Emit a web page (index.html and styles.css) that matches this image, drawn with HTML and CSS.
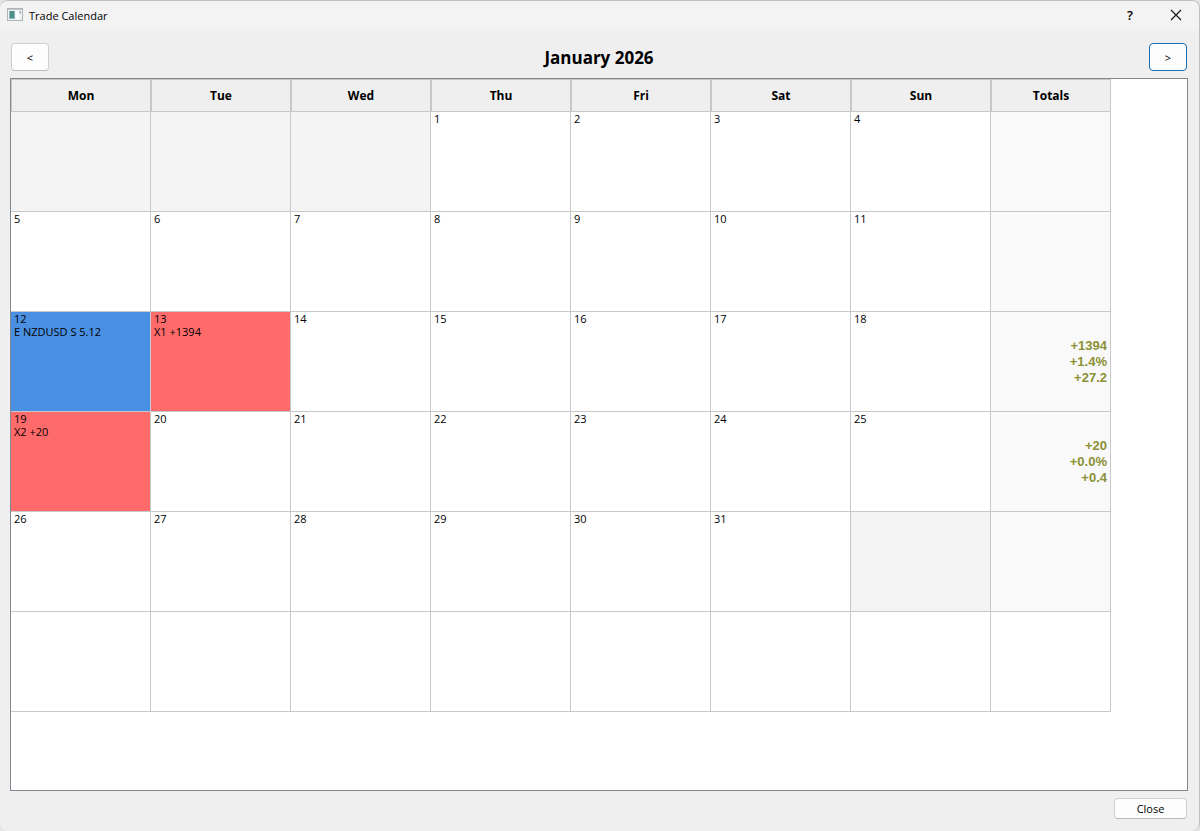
FILE: index.html
```html
<!DOCTYPE html>
<html lang="en">
<head>
    <meta charset="UTF-8">
    <meta name="viewport" content="width=device-width, initial-scale=1.0">
    <title>Trade Calendar</title>
    <link rel="stylesheet" href="styles.css">
</head>
<body>

    <div class="window">

        <!-- Title Bar -->
        <header class="title-bar">
            <svg class="app-icon" width="16" height="14" viewBox="0 0 16 14">
                <rect x="0.5" y="0.5" width="15" height="12" fill="#f1f4f4" stroke="#b0b4b6"/>
                <rect x="1" y="1" width="14" height="1" fill="#c3c8ca"/>
                <rect x="2" y="3" width="6" height="8" fill="#8fb3c9"/>
                <rect x="3" y="3" width="4" height="7" fill="#4c9088"/>
                <rect x="9" y="3" width="3" height="8" fill="#ffffff"/>
                <path d="M12 3 H14 V6 H13 V5 H12 Z" fill="#b4bcc0"/>
            </svg>
            <span class="title">Trade Calendar</span>
            <button class="title-button help" aria-label="Help">?</button>
            <button class="title-button" aria-label="Close window">
                <svg width="12" height="12" viewBox="0 0 12 12">
                    <path d="M1 1 L11 11 M11 1 L1 11" stroke="#1a1a1a" stroke-width="1.2" fill="none"/>
                </svg>
            </button>
        </header>

        <!-- Month Navigation -->
        <div class="month-bar">
            <button class="nav-button" aria-label="Previous month">&lt;</button>
            <h1>January 2026</h1>
            <button class="nav-button active" aria-label="Next month">&gt;</button>
        </div>

        <!-- Calendar Grid -->
        <div class="calendar-frame">
            <table class="calendar">
                <thead>
                    <tr>
                        <th>Mon</th>
                        <th>Tue</th>
                        <th>Wed</th>
                        <th>Thu</th>
                        <th>Fri</th>
                        <th>Sat</th>
                        <th>Sun</th>
                        <th class="totals-head">Totals</th>
                    </tr>
                </thead>
                <tbody>
                    <tr>
                        <td class="outside"></td>
                        <td class="outside"></td>
                        <td class="outside"></td>
                        <td>1</td>
                        <td>2</td>
                        <td>3</td>
                        <td>4</td>
                        <td class="totals"></td>
                    </tr>
                    <tr>
                        <td>5</td>
                        <td>6</td>
                        <td>7</td>
                        <td>8</td>
                        <td>9</td>
                        <td>10</td>
                        <td>11</td>
                        <td class="totals"></td>
                    </tr>
                    <tr>
                        <td class="entry">12<br>E NZDUSD S 5.12</td>
                        <td class="exit">13<br>X1 +1394</td>
                        <td>14</td>
                        <td>15</td>
                        <td>16</td>
                        <td>17</td>
                        <td>18</td>
                        <td class="totals">+1394<br>+1.4%<br>+27.2</td>
                    </tr>
                    <tr>
                        <td class="exit">19<br>X2 +20</td>
                        <td>20</td>
                        <td>21</td>
                        <td>22</td>
                        <td>23</td>
                        <td>24</td>
                        <td>25</td>
                        <td class="totals">+20<br>+0.0%<br>+0.4</td>
                    </tr>
                    <tr>
                        <td>26</td>
                        <td>27</td>
                        <td>28</td>
                        <td>29</td>
                        <td>30</td>
                        <td>31</td>
                        <td class="outside"></td>
                        <td class="totals"></td>
                    </tr>
                    <tr>
                        <td></td>
                        <td></td>
                        <td></td>
                        <td></td>
                        <td></td>
                        <td></td>
                        <td></td>
                        <td></td>
                    </tr>
                </tbody>
            </table>
        </div>

        <!-- Footer -->
        <footer class="footer">
            <button class="close-button">Close</button>
        </footer>

    </div>

</body>
</html>
```

FILE: styles.css
```css
* {
    box-sizing: border-box;
}
body {
    margin: 0;
    background-color: #e4e4e6;
    font-family: "Open Sans", "Noto Sans", sans-serif;
    font-size: 11px;
    color: #000;
}
button {
    font-family: inherit;
    font-size: 11px;
    color: #000;
    padding: 0;
}
.window {
    display: flex;
    flex-direction: column;
    min-height: 100vh;
    background-color: #efefef;
    border-top: 1px solid #c0c0c2;
    border-right: 1px solid #c0c0c2;
    border-radius: 8px;
    overflow: hidden;
}

/* Title bar */
.title-bar {
    display: flex;
    align-items: center;
    height: 30px;
    padding: 0 0 2px 7px;
    background-color: #f3f3f3;
}
.title {
    flex: 1;
    margin-left: 6px;
}
.title-button {
    display: flex;
    align-items: center;
    justify-content: center;
    width: 46px;
    height: 28px;
    border: none;
    background: none;
}
.help {
    font-size: 13px;
    font-weight: 600;
}

/* Month navigation */
.month-bar {
    display: flex;
    align-items: center;
    justify-content: space-between;
    padding: 12px 12px 7px 11px;
}
.month-bar h1 {
    margin: 0;
    padding-top: 2px;
    font-size: 17px;
    line-height: 26px;
}
.nav-button {
    width: 38px;
    height: 28px;
    background-color: #fdfdfd;
    border: 1px solid #d0d0d0;
    border-bottom-color: #bcbcbc;
    border-radius: 4px;
}
.nav-button.active {
    border-color: #1a6fb0;
}

/* Calendar */
.calendar-frame {
    flex: 1;
    margin: 0 11px 0 10px;
    background-color: #fff;
    border: 1px solid #828790;
}
.calendar {
    table-layout: fixed;
    width: 1100px;
    border-collapse: separate;
    border-spacing: 0;
}
.calendar th {
    height: 33px;
    padding: 0;
    background-color: #efefef;
    border: 1px solid #c8c8c8;
    font-size: 12px;
    font-weight: bold;
}
.calendar .totals-head {
    width: 120px;
}
.calendar td {
    height: 100px;
    padding: 0 3px;
    border-right: 1px solid #c8c8c8;
    border-bottom: 1px solid #c8c8c8;
    vertical-align: top;
    line-height: 13px;
}
.calendar .outside {
    background-color: #f4f4f4;
}
.calendar .entry {
    background-color: #4a90e2;
}
.calendar .exit {
    background-color: #ff6b6b;
}
.calendar .totals {
    background-color: #f9f9f9;
    color: #8b9134;
    font-family: "Liberation Sans", Arial, sans-serif;
    font-size: 13px;
    font-weight: bold;
    line-height: 16px;
    text-align: right;
    vertical-align: middle;
}

/* Footer */
.footer {
    display: flex;
    justify-content: flex-end;
    padding: 7px 12px 12px;
}
.close-button {
    width: 73px;
    height: 21px;
    background-color: #fdfdfd;
    border: 1px solid #d0d0d0;
    border-bottom-color: #bcbcbc;
    border-radius: 4px;
}
```
